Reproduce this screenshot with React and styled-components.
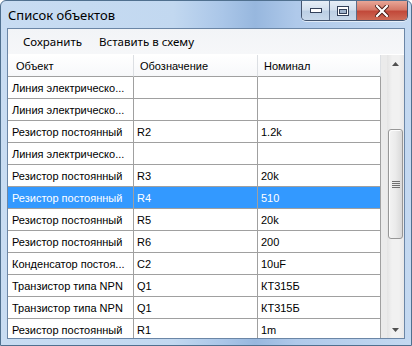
import React from 'react';
import styled, { createGlobalStyle } from 'styled-components';

const GlobalStyle = createGlobalStyle`
  html, body { margin: 0; padding: 0; background: #fff; }
  body { overflow: hidden; }
`;

const Window = styled.div`
  width: 412px;
  height: 346px;
  box-sizing: border-box;
  display: flex;
  flex-direction: column;
  border: 1px solid #50708f;
  border-radius: 6px 6px 0 0;
  background: linear-gradient(90deg, #c8dcf2 0%, #c2d8f0 42%, #aac6e8 54%, #97b7de 62%, #afc9ea 72%, #c4d9f1 100%);
  overflow: hidden;
`;

const TitleBar = styled.div`
  height: 27px;
  flex: none;
  display: flex;
  align-items: flex-start;
  padding: 0 3px 0 7px;
`;

const Title = styled.div`
  flex: 1;
  height: 28px;
  display: flex;
  align-items: center;
  font: 13px "Noto Sans", "Liberation Sans", sans-serif;
  color: #000;
`;

const CaptionButtons = styled.div`
  display: flex;
  height: 19px;
  border: 1px solid #44556f;
  border-top: none;
  border-radius: 0 0 5px 5px;
  overflow: hidden;
  box-shadow: 0 1px 0 rgba(255, 255, 255, 0.6);
`;

const CaptionButton = styled.div`
  width: ${p => p.$w}px;
  display: flex;
  align-items: center;
  justify-content: center;
  border-left: ${p => (p.$first ? 'none' : '1px solid #5b6e8a')};
  background: ${p =>
    p.$close
      ? 'linear-gradient(180deg, #e8a697 0%, #d57a69 45%, #c2493a 55%, #cf6a55 100%)'
      : 'linear-gradient(180deg, #e6eef7 0%, #d3e0ee 45%, #bccfe4 55%, #c9d9eb 100%)'};
`;

const Body = styled.div`
  flex: 1;
  display: flex;
  flex-direction: column;
  padding: 0 6px 6px 6px;
  min-height: 0;
`;

const Client = styled.div`
  flex: 1;
  display: flex;
  flex-direction: column;
  border: 1px solid #6b86a6;
  background: #f0f0f0;
  overflow: hidden;
  min-height: 0;
`;

const MenuBar = styled.div`
  height: 25px;
  flex: none;
  display: flex;
  align-items: stretch;
  padding-left: 6px;
  border-bottom: 1px solid #ffffff;
  background: linear-gradient(180deg, #f2f4f7 0%, #f6f7f9 100%);
`;

const MenuItem = styled.div`
  display: flex;
  align-items: center;
  padding: 0 8px 0 9px;
  font: 11.5px "Noto Sans", "Liberation Sans", sans-serif;
  color: #000;
`;

const GridArea = styled.div`
  flex: 1;
  display: flex;
  min-height: 0;
  background: #ebebeb;
`;

const Table = styled.div`
  width: 373px;
  flex: none;
  display: flex;
  flex-direction: column;
  overflow: hidden;
`;

const Row = styled.div`
  display: grid;
  grid-template-columns: 126px 124px 123px;
  flex: none;
`;

const HeaderCell = styled.div`
  height: 21px;
  display: flex;
  align-items: center;
  padding-left: ${p => (p.$first ? 8 : 6)}px;
  border-right: 1px solid #dcdfe3;
  border-bottom: 1px solid #a0a0a0;
  background: linear-gradient(180deg, #ffffff 0%, #f7f8fa 100%);
  font: 11px "Liberation Sans", Arial, sans-serif;
  color: #000;
  white-space: nowrap;
`;

const Cell = styled.div`
  height: 21px;
  display: flex;
  align-items: center;
  padding-left: ${p => (p.$first ? 4 : 3)}px;
  border-right: 1px solid #a0a0a0;
  border-bottom: 1px solid #a0a0a0;
  background: ${p => (p.$selected ? '#3399ff' : '#ffffff')};
  color: ${p => (p.$selected ? '#ffffff' : '#000000')};
  font: 11px "Liberation Sans", Arial, sans-serif;
  white-space: nowrap;
  overflow: hidden;
`;

const Gap = styled.div`
  width: 6px;
  flex: none;
`;

const ScrollBar = styled.div`
  width: 17px;
  flex: none;
  display: flex;
  flex-direction: column;
  background: linear-gradient(90deg, #e4e4e4 0%, #f1f1f1 30%, #f1f1f1 70%, #e8e8e8 100%);
`;

const ArrowButton = styled.div`
  height: 17px;
  flex: none;
  display: flex;
  align-items: center;
  justify-content: center;
`;

const Track = styled.div`
  flex: 1;
  padding-top: ${p => p.$offset}px;
`;

const Thumb = styled.div`
  height: ${p => p.$size}px;
  margin: 0 1px 0 1px;
  box-sizing: border-box;
  border: 1px solid #979797;
  border-radius: 3px;
  background: linear-gradient(90deg, #f3f3f3 0%, #ebebeb 50%, #d9d9d9 100%);
  box-shadow: inset 1px 1px 0 #fcfcfc;
  display: flex;
  align-items: center;
  justify-content: center;
`;

const Grip = () => (
  <svg width="8" height="7" viewBox="0 0 8 7">
    {[0, 2, 4, 6].map(y => (
      <rect key={y} x="0" y={y} width="8" height="1" fill="#707070" />
    ))}
  </svg>
);

const Arrow = ({ down }) => (
  <svg width="7" height="4" viewBox="0 0 7 4">
    <path d={down ? 'M0 0 H7 L3.5 4 Z' : 'M0 4 H7 L3.5 0 Z'} fill="#505050" />
  </svg>
);

const rows = [
  ['Линия электрическо...', '', ''],
  ['Линия электрическо...', '', ''],
  ['Резистор постоянный', 'R2', '1.2k'],
  ['Линия электрическо...', '', ''],
  ['Резистор постоянный', 'R3', '20k'],
  ['Резистор постоянный', 'R4', '510'],
  ['Резистор постоянный', 'R5', '20k'],
  ['Резистор постоянный', 'R6', '200'],
  ['Конденсатор постоя...', 'C2', '10uF'],
  ['Транзистор типа NPN', 'Q1', 'КТ315Б'],
  ['Транзистор типа NPN', 'Q1', 'КТ315Б'],
  ['Резистор постоянный', 'R1', '1m'],
];

const selectedRow = 5;

export default function App() {
  return (
    <>
      <GlobalStyle />
      <Window>
        <TitleBar>
          <Title>Список объектов</Title>
          <CaptionButtons>
            <CaptionButton $w={27} $first>
              <svg width="12" height="5" viewBox="0 0 12 5">
                <rect x="0.5" y="0.5" width="11" height="4" fill="#fff" stroke="#33415a" />
              </svg>
            </CaptionButton>
            <CaptionButton $w={26}>
              <svg width="12" height="10" viewBox="0 0 12 10">
                <rect x="0.5" y="0.5" width="11" height="9" fill="#fff" stroke="#33415a" />
                <rect x="2.5" y="3.5" width="7" height="4" fill="#9fb3cc" stroke="#33415a" />
              </svg>
            </CaptionButton>
            <CaptionButton $w={50} $close>
              <svg width="14" height="12" viewBox="0 0 14 12">
                <path d="M2 1 L12 11 M12 1 L2 11" stroke="#4a1a14" strokeWidth="4" strokeLinecap="square" />
                <path d="M2 1 L12 11 M12 1 L2 11" stroke="#ffffff" strokeWidth="2.2" strokeLinecap="square" />
              </svg>
            </CaptionButton>
          </CaptionButtons>
        </TitleBar>
        <Body>
          <Client>
            <MenuBar>
              <MenuItem>Сохранить</MenuItem>
              <MenuItem>Вставить в схему</MenuItem>
            </MenuBar>
            <GridArea>
              <Table>
                <Row>
                  <HeaderCell $first>Объект</HeaderCell>
                  <HeaderCell>Обозначение</HeaderCell>
                  <HeaderCell>Номинал</HeaderCell>
                </Row>
                {rows.map((r, i) => (
                  <Row key={i}>
                    {r.map((text, j) => (
                      <Cell key={j} $first={j === 0} $selected={i === selectedRow}>
                        {text}
                      </Cell>
                    ))}
                  </Row>
                ))}
              </Table>
              <Gap />
              <ScrollBar>
                <ArrowButton><Arrow /></ArrowButton>
                <Track $offset={57}>
                  <Thumb $size={110}><Grip /></Thumb>
                </Track>
                <ArrowButton><Arrow down /></ArrowButton>
              </ScrollBar>
            </GridArea>
          </Client>
        </Body>
      </Window>
    </>
  );
}
